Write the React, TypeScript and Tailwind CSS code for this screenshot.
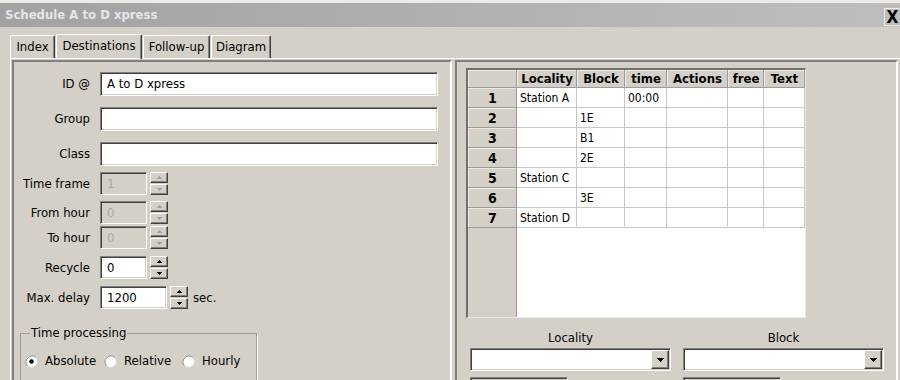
import React from "react";

const sunken =
  "border border-t-[#808080] border-l-[#808080] border-b-white border-r-white shadow-[inset_1px_1px_0_#404040,inset_-1px_-1px_0_#d4d0c8]";
const raised =
  "border border-t-white border-l-white border-b-[#404040] border-r-[#404040] shadow-[inset_-1px_-1px_0_#808080]";

// grid cell lines
const hdrCell = "bg-[#d4d0c8] shadow-[inset_-1px_-1px_0_#9c9c9c,inset_1px_1px_0_#ecebe7]";
const dataCell = "bg-white shadow-[inset_-1px_-1px_0_#c8c8c8]";

type FieldProps = { value?: string; className?: string; disabled?: boolean };

function Field({ value = "", className = "", disabled = false }: FieldProps) {
  return (
    <div
      className={`h-[23px] flex items-center pl-[6px] ${sunken} ${
        disabled ? "bg-[#d4d0c8] text-[#a8a8a8]" : "bg-white text-black"
      } ${className}`}
    >
      {value}
    </div>
  );
}

const Tri = ({ up = false, color }: { up?: boolean; color: string }) => (
  <svg width="5" height="3" viewBox="0 0 5 3" shapeRendering="crispEdges">
    <path
      d={up ? "M2 0h1v1h1v1h1v1H0V2h1V1h1z" : "M0 0h5v1h-1v1h-1v1H2V2H1V1H0z"}
      fill={color}
    />
  </svg>
);

const Spin = ({ disabled = false }: { disabled?: boolean }) => {
  const c = disabled ? "#a0a0a0" : "#000";
  return (
    <div className="ml-[3px] flex flex-col gap-[1px] w-[18px] h-[23px]">
      <div className={`flex-1 flex items-center justify-center bg-[#d4d0c8] ${raised}`}>
        <Tri up color={c} />
      </div>
      <div className={`flex-1 flex items-center justify-center bg-[#d4d0c8] ${raised}`}>
        <Tri color={c} />
      </div>
    </div>
  );
};

type RowProps = { label: string; className?: string; children: React.ReactNode };

const Row = ({ label, className = "", children }: RowProps) => (
  <div className={`flex items-center ${className}`}>
    <div className="w-[76px] text-right whitespace-nowrap">{label}</div>
    <div className="ml-[10px] flex items-center">{children}</div>
  </div>
);

const Radio = ({ checked = false }: { checked?: boolean }) => (
  <svg width="13" height="13" viewBox="0 0 13 13" className="shrink-0">
    <circle cx="6.5" cy="6.5" r="6" fill="#fff" stroke="#d8d5ce" />
    <path d="M2.3 10.7 A6 6 0 0 1 10.7 2.3" fill="none" stroke="#8a8780" strokeWidth="1" />
    {checked && <circle cx="6.5" cy="6.5" r="2.2" fill="#000" />}
  </svg>
);

const Combo = () => (
  <div className={`h-[23px] w-[201px] bg-white flex justify-end items-center pr-[1px] ${sunken}`}>
    <div className={`w-[18px] h-[19px] bg-[#d4d0c8] flex items-center justify-center ${raised}`}>
      <svg width="7" height="4" viewBox="0 0 7 4" shapeRendering="crispEdges">
        <path d="M0 0h7v1h-1v1h-1v1h-1v1H3V3H2V2H1V1H0z" fill="#000" />
      </svg>
    </div>
  </div>
);

const columns = ["Locality", "Block", "time", "Actions", "free", "Text"];

const rows = [
  ["Station A", "", "00:00", "", "", ""],
  ["", "1E", "", "", "", ""],
  ["", "B1", "", "", "", ""],
  ["", "2E", "", "", "", ""],
  ["Station C", "", "", "", "", ""],
  ["", "3E", "", "", "", ""],
  ["Station D", "", "", "", "", ""],
];

const tabs = [
  { label: "Index", w: "w-[45px]" },
  { label: "Destinations", w: "w-[86px]", active: true },
  { label: "Follow-up", w: "w-[67px]" },
  { label: "Diagram", w: "w-[60px]" },
];

export default function App() {
  return (
    <div className="w-[900px] h-[380px] overflow-hidden bg-[#d4d0c8] text-[13px] text-black font-['DejaVu_Sans_Condensed','DejaVu_Sans',sans-serif] border-t-[3px] border-[#ecebe7]">
      {/* title bar */}
      <div className="h-[24px] flex items-center justify-between pl-[5px] bg-gradient-to-r from-[#a2a2a2] to-[#bebebe]">
        <span className="font-bold text-[#e6e6e6]">Schedule A to D xpress</span>
        <div className="w-[16px] h-[18px] mt-[4px] border-l border-t border-b border-[#ececec] flex items-center justify-center text-[17px] font-bold leading-none">
          X
        </div>
      </div>

      {/* tabs */}
      <div className="flex items-end h-[31px] pl-[10px] gap-[1px]">
        {tabs.map((t) => (
          <div
            key={t.label}
            className={`${t.w} flex items-center justify-center rounded-t-[2px] border-t border-l border-white border-r border-r-[#404040] shadow-[inset_-1px_0_0_#808080] ${
              t.active ? "h-[25px] pb-[3px] relative z-10 -mb-[1px]" : "h-[23px]"
            }`}
          >
            {t.label}
          </div>
        ))}
      </div>

      {/* tab page */}
      <div className="ml-[10px] w-[892px] h-[330px] border-t border-l border-white pt-[1px] pl-[1px] flex gap-[3px]">
        {/* left panel */}
        <div className="w-[440px] h-[330px] border-2 border-t-[#808080] border-l-[#808080] border-b-white border-r-white">
          <Row label="ID @" className="mt-[10px]">
            <Field value="A to D xpress" className="w-[338px] h-[24px]" />
          </Row>
          <Row label="Group" className="mt-[11px]">
            <Field className="w-[338px] h-[24px]" />
          </Row>
          <Row label="Class" className="mt-[11px]">
            <Field className="w-[338px] h-[24px]" />
          </Row>
          <Row label="Time frame" className="mt-[6px]">
            <Field value="1" disabled className="w-[47px]" />
            <Spin disabled />
          </Row>
          <Row label="From hour" className="mt-[6px]">
            <Field value="0" disabled className="w-[47px]" />
            <Spin disabled />
          </Row>
          <Row label="To hour" className="mt-[2px]">
            <Field value="0" disabled className="w-[47px]" />
            <Spin disabled />
          </Row>
          <Row label="Recycle" className="mt-[7px]">
            <Field value="0" className="w-[47px]" />
            <Spin />
          </Row>
          <Row label="Max. delay" className="mt-[7px]">
            <Field value="1200" className="w-[67px]" />
            <Spin />
            <span className="ml-[5px]">sec.</span>
          </Row>

          <fieldset className="ml-[6px] mt-[16px] w-[237px] h-[70px] border border-[#a09c94] shadow-[1px_1px_0_#fff] pl-[4px]">
            <legend className="ml-[5px] px-[1px] leading-[16px] bg-[#d4d0c8]">Time processing</legend>
            <div className="mt-[12px] flex items-center h-[16px]">
              <div className="w-[79px] flex items-center gap-[7px] overflow-hidden whitespace-nowrap">
                <Radio checked />
                <span>Absolute</span>
              </div>
              <div className="w-[78px] flex items-center gap-[7px] whitespace-nowrap">
                <Radio />
                <span>Relative</span>
              </div>
              <div className="flex items-center gap-[7px] whitespace-nowrap">
                <Radio />
                <span>Hourly</span>
              </div>
            </div>
          </fieldset>
        </div>

        {/* right panel */}
        <div className="w-[443px] h-[330px] border-2 border-t-[#808080] border-l-[#808080] border-b-white border-r-white">
          <div className="ml-[9px] mt-[6px] w-[340px] h-[250px] border-t-2 border-l-2 border-[#707070] border-r border-b border-r-[#e8e8e8] border-b-[#e8e8e8] flex flex-col">
            <div className="grid grid-cols-[49px_60px_48px_42px_61px_36px_41px] grid-rows-[18px] h-[18px] shrink-0 leading-[18px]">
              <div className={hdrCell} />
              {columns.map((c) => (
                <div key={c} className={`${hdrCell} font-bold text-center`}>
                  {c}
                </div>
              ))}
            </div>
            {rows.map((r, i) => (
              <div
                key={i}
                className="grid grid-cols-[49px_60px_48px_42px_61px_36px_41px] grid-rows-[20px] h-[20px] shrink-0 leading-[20px] overflow-hidden"
              >
                <div className={`${hdrCell} font-bold text-[14px] text-center`}>{i + 1}</div>
                {r.map((v, j) => (
                  <div key={j} className={`${dataCell} text-[12px] pl-[3px] whitespace-nowrap overflow-hidden`}>
                    {v}
                  </div>
                ))}
              </div>
            ))}
            <div className="flex-1 flex">
              <div className="w-[49px] bg-[#d4d0c8] shadow-[inset_-1px_0_0_#9c9c9c]" />
              <div className="w-[288px] bg-white" />
            </div>
          </div>

          <div className="ml-[13px] mt-[12px] flex gap-[12px]">
            <div className="w-[201px]">
              <div className="text-center leading-[16px]">Locality</div>
              <div className="mt-[2px]">
                <Combo />
              </div>
              <div className={`mt-[6px] w-[98px] h-[23px] ${sunken} bg-[#d4d0c8]`} />
            </div>
            <div className="w-[201px]">
              <div className="text-center leading-[16px]">Block</div>
              <div className="mt-[2px]">
                <Combo />
              </div>
              <div className={`mt-[6px] w-[98px] h-[23px] ${sunken} bg-[#d4d0c8]`} />
            </div>
          </div>
        </div>
      </div>
    </div>
  );
}
